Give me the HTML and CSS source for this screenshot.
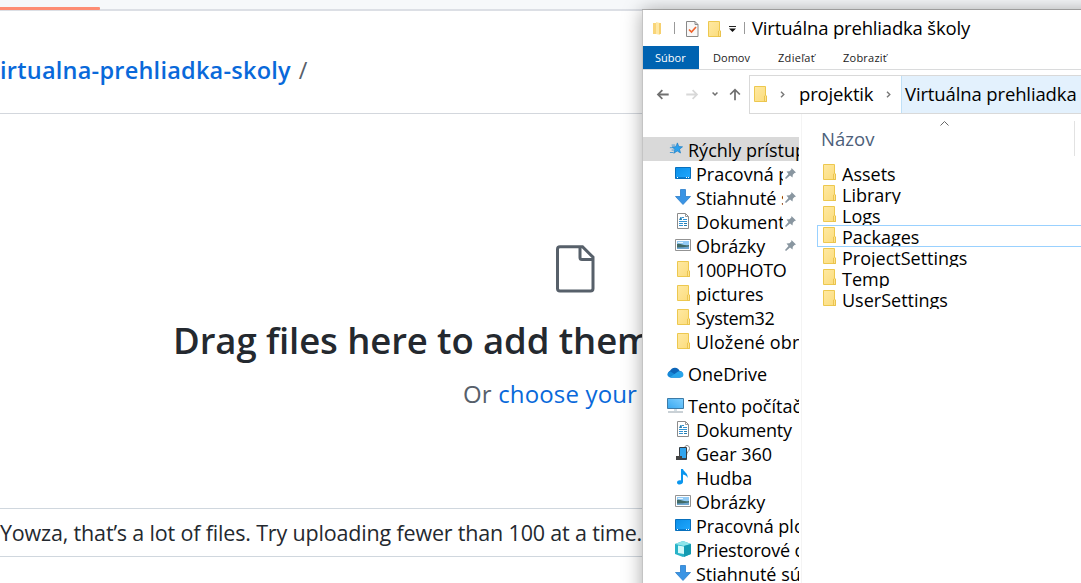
FILE: index.html
```html
<!DOCTYPE html>
<html lang="sk">
<head>
<meta charset="utf-8">
<title>Upload files</title>
<link rel="stylesheet" href="styles.css">
</head>
<body>
<svg class="defs" width="0" height="0">
  <defs>
    <linearGradient id="gold" x1="0" y1="0" x2="1" y2="1"><stop offset="0" stop-color="#ffe9a2"/><stop offset="1" stop-color="#fbdc7c"/></linearGradient>
    <linearGradient id="screen" x1="0" y1="0" x2="1" y2="1"><stop offset="0" stop-color="#0b8fe8"/><stop offset="1" stop-color="#20a8ff"/></linearGradient>
    <linearGradient id="monitor" x1="0" y1="1" x2="1" y2="0"><stop offset="0" stop-color="#38a8f0"/><stop offset="1" stop-color="#7fcfff"/></linearGradient>
  </defs>
  <symbol id="folder" viewBox="0 0 14 17"><path d="M.5.5h11v9.5h1v5.5H.5z" fill="url(#gold)" stroke="#edc84f"/><path d="M10.5 15.5V10l1-.8 1 .8v5.5z" fill="#ffe48c" stroke="#e6bd45" stroke-width=".8"/></symbol>
  <symbol id="star" viewBox="0 0 16 16"><path d="M9.600 1l1.600 4.200 4.300.3-3.500 2.700 1.200 4.400-3.800-2.300-3.900 2.600 1.200-4.600L3.400 5.600l4.500-.3z" fill="#2da1ed" stroke="#1276c0" stroke-width=".7"/><path d="M3 3.500h4M1 6.500h4M3 9.200h3M1 12h4" stroke="#3c94d2"/></symbol>
  <symbol id="desktop" viewBox="0 0 16 12"><path d="M.5.5h15v11H.5z" fill="url(#screen)" stroke="#0870bd"/><path d="M1 10.500h14" stroke="#087bce"/><path d="M2 10.500h1M11 10.500h1M13 10.500h1" stroke="#fff"/></symbol>
  <symbol id="down" viewBox="0 0 16 16"><path d="M5.500.5h5v7h5L8 15.500.5 7.500h5z" fill="#3a94e4" stroke="#2a7dcc" stroke-width=".8"/></symbol>
  <symbol id="doc" viewBox="0 0 12 16"><path d="M.5.500h8l3 3v12H.5z" fill="#fff" stroke="#8b8b8b"/><path d="M8.500.5v3h3" fill="none" stroke="#999"/><path d="M5 4.500h2M6 6.500h4M2 8.500h8M2 10.500h4M2 12.500h4" stroke="#3292d2"/><path d="M2 7l1.500-3h1L5 7zM7 10h3v1H7zM7 12h3v1H7z" fill="#257eb1"/></symbol>
  <symbol id="image" viewBox="0 0 16 12"><path d="M.5.500h15v11H.5z" fill="#fff" stroke="#939393"/><path d="M2 2h12v8H2z" fill="#92cbf5"/><path d="M2 5c4-1 6 2 12 1v4H2z" fill="#416b68"/><path d="M2 8.500c4 0 8-.5 12-1V10H2z" fill="#6ea6d0"/><path d="M3 3.500h5" stroke="#e9f6ff"/></symbol>
  <symbol id="cloud" viewBox="0 0 17 11"><path d="M4 10.500A3.700 3.700 0 0 1 3.200 3.600 5.200 5.200 0 0 1 12.700 4 3.300 3.300 0 0 1 13.200 10.500z" fill="#0d65b8"/><path d="M4 10.500C-.7 10.500-.6 4.800 3.300 4.500l10 6z" fill="#1689d8"/><path d="M3 10.300L10 5.200c1-1.100 2.800-1.400 4-.6 3.500 1 3 5.900-.4 5.900H4z" fill="#28a5eb"/></symbol>
  <symbol id="computer" viewBox="0 0 17 15"><path d="M.5.500h16v10H.5z" fill="url(#monitor)" stroke="#3d7ba7"/><path d="M7 11h3v2H7z" fill="#d5dfe5"/><path d="M1 14h15" stroke="#93a2ac"/></symbol>
  <symbol id="device" viewBox="0 0 16 16"><path d="M9.500 3.500c0-4 5-4 5 0 0 3-3 3-3 7" fill="none" stroke="#888"/><path d="M4.500 2.500h7v12h-7z" fill="#31a5ef" stroke="#343c43"/><path d="M1 11h3v-2h1v2h2v4H1z" fill="#444"/><path d="M5 13h6v2H5z" fill="#38434d"/></symbol>
  <symbol id="note" viewBox="0 0 12 16"><path d="M4 0h2c.5 3 5.500 4 4.500 9-.5-2-2-3-4.500-3.500V13C6 16 0 16.500 0 13.500 0 11.500 2.500 11 4 11.500z" fill="#0b96ee"/></symbol>
  <symbol id="cube" viewBox="0 0 16 16"><path d="M0 3l8-3 8 3v10l-8 3-8-3z" fill="#28b3c8"/><path d="M0 3l8-3 8 3-7 2z" fill="#8ee5ea"/><path d="M3 4.500l6 1V13l-6-1z" fill="#d3fafa"/><path d="M9 5l7-2v10l-7 3z" fill="#139bb2"/></symbol>
  <symbol id="pin" viewBox="0 0 11 11"><path d="M6.500 0L11 4.500 9.500 5 7.800 6.800 7.500 9.500 5 7.500 1 11 0 10 3.500 6 1.500 3.500 4.500 3.200 6.300 1.500z" fill="#8996a0"/></symbol>
</svg>

<div class="screen">
  <main class="page">
    <div class="topbar"><div class="active-tab"></div></div>
    <div class="crumb"><a class="repo">irtualna-prehliadka-skoly</a><span class="slash">/</span></div>
    <section class="drop">
      <svg class="file-icon" viewBox="0 0 40 48" fill="none" stroke="#57606a" stroke-width="3"><path d="M5 1.700h22.500L38 12.200V43.500a2.500 2.500 0 0 1-2.500 2.500H5a2.500 2.500 0 0 1-2.500-2.500V4.200A2.500 2.500 0 0 1 5 1.700z"/><path d="M25 2v10.500a2 2 0 0 0 2 2h11"/></svg>
      <h1>Drag files here to add them</h1>
      <p class="choose">Or <a>choose your</a></p>
    </section>
    <div class="warning">Yowza, that’s a lot of files. Try uploading fewer than 100 at a time.</div>
  </main>

  <section class="window">
    <header class="titlebar">
      <svg class="app-folder" viewBox="0 0 10 13"><path d="M0 1h7v11H0z" fill="#f9d579"/><path d="M3 0l4 1v12l-4-1z" fill="#ffe8a5"/><path d="M6 1h2v11H6z" fill="#f6d06f"/></svg>
      <i class="rule r1"></i>
      <svg class="check" viewBox="0 0 13 16"><path d="M.5.500h8.500l3 3v12H.5z" fill="#f8f8f8" stroke="#888"/><path d="M9 .5v3h3" fill="none" stroke="#888"/><path d="M3 8.500l2.500 2.500 4.500-5" fill="none" stroke="#f0642d" stroke-width="1.700"/></svg>
      <svg class="folder"><use href="#folder"/></svg>
      <svg class="menu" viewBox="0 0 7 6"><path d="M0 .5h7" stroke="#222"/><path d="M0 2.500h7L3.500 6z" fill="#111"/></svg>
      <i class="rule r2"></i>
      <span class="title">Virtuálna prehliadka školy</span>
    </header>
    <nav class="tabs"><span class="tab file">Súbor</span><span class="tab home">Domov</span><span class="tab share">Zdieľať</span><span class="tab view">Zobraziť</span></nav>
    <div class="address">
      <svg class="nav-icons" viewBox="0 0 106 40" fill="none" stroke="#707070" stroke-width="1.800"><path d="M25 20H14M18.500 15.500L14 20l4.500 4.500"/><path d="M43 20h11M49.500 15.500L54 20l-4.500 4.500" stroke="#d8d8d8"/><path d="M70 18l2.500 2.500L75 18" stroke-width="1.600"/><path d="M93 26V15M88 20l5-5 5 5"/></svg>
      <div class="path">
        <svg class="folder"><use href="#folder"/></svg>
        <svg class="chev c1" viewBox="0 0 5 7"><path d="M1 .7l2.800 2.800L1 6.300"/></svg>
        <span class="parent">projektik</span>
        <svg class="chev c2" viewBox="0 0 5 7"><path d="M1 .7l2.800 2.800L1 6.300"/></svg>
        <span class="current">Virtuálna prehliadka</span>
      </div>
    </div>
    <div class="body">
      <aside class="tree">
        <div class="row root selected"><svg class="ico star"><use href="#star"/></svg><span>Rýchly prístup</span></div>
        <div class="row pinned"><svg class="ico wide"><use href="#desktop"/></svg><span>Pracovná plocha</span><svg class="pin"><use href="#pin"/></svg></div>
        <div class="row pinned"><svg class="ico"><use href="#down"/></svg><span>Stiahnuté súbory</span><svg class="pin"><use href="#pin"/></svg></div>
        <div class="row pinned"><svg class="ico"><use href="#doc"/></svg><span>Dokumenty</span><svg class="pin"><use href="#pin"/></svg></div>
        <div class="row pinned"><svg class="ico wide"><use href="#image"/></svg><span>Obrázky</span><svg class="pin"><use href="#pin"/></svg></div>
        <div class="row"><svg class="ico fold"><use href="#folder"/></svg><span class="photo">100PHOTO</span></div>
        <div class="row"><svg class="ico fold"><use href="#folder"/></svg><span>pictures</span></div>
        <div class="row"><svg class="ico fold"><use href="#folder"/></svg><span class="system">System32</span></div>
        <div class="row"><svg class="ico fold"><use href="#folder"/></svg><span class="saved">Uložené obrázky</span></div>
        <div class="row root gap"><svg class="ico cloud"><use href="#cloud"/></svg><span>OneDrive</span></div>
        <div class="row root gap"><svg class="ico pc"><use href="#computer"/></svg><span>Tento počítač</span></div>
        <div class="row"><svg class="ico"><use href="#doc"/></svg><span class="docs">Dokumenty</span></div>
        <div class="row"><svg class="ico"><use href="#device"/></svg><span>Gear 360</span></div>
        <div class="row"><svg class="ico"><use href="#note"/></svg><span>Hudba</span></div>
        <div class="row"><svg class="ico wide"><use href="#image"/></svg><span>Obrázky</span></div>
        <div class="row"><svg class="ico wide"><use href="#desktop"/></svg><span>Pracovná plocha</span></div>
        <div class="row"><svg class="ico"><use href="#cube"/></svg><span class="spatial">Priestorové objekty</span></div>
        <div class="row"><svg class="ico"><use href="#down"/></svg><span>Stiahnuté súbory</span></div>
      </aside>
      <section class="files">
        <div class="columns"><span>Názov</span><svg class="sort" viewBox="0 0 9 5"><path d="M.5 4.500l4-4 4 4" fill="none" stroke="#666"/></svg></div>
        <div class="list">
          <div class="item"><svg class="folder"><use href="#folder"/></svg><span>Assets</span></div>
          <div class="item"><svg class="folder"><use href="#folder"/></svg><span>Library</span></div>
          <div class="item"><svg class="folder"><use href="#folder"/></svg><span>Logs</span></div>
          <div class="item focused"><svg class="folder"><use href="#folder"/></svg><span>Packages</span></div>
          <div class="item"><svg class="folder"><use href="#folder"/></svg><span>ProjectSettings</span></div>
          <div class="item"><svg class="folder"><use href="#folder"/></svg><span>Temp</span></div>
          <div class="item"><svg class="folder"><use href="#folder"/></svg><span>UserSettings</span></div>
        </div>
      </section>
    </div>
  </section>
</div>
</body>
</html>
```

FILE: styles.css
```css
* { box-sizing: border-box; }
body { margin: 0; font-family: "Open Sans", "Noto Sans", sans-serif; color: #000; }
svg { display: block; flex: none; }
.defs { position: absolute; }
.screen { position: relative; width: 1081px; height: 583px; overflow: hidden; background: #fff; white-space: nowrap; }

/* upload page */
.topbar { height: 11px; padding-top: 7px; background: #f6f8fa; border-bottom: 2px solid #dcdfe5; }
.active-tab { width: 100px; height: 3px; background: #fd8c73; border-radius: 0 1px 1px 0; }
.crumb { display: flex; height: 103px; line-height: 32px; padding-top: 43px; border-bottom: 1px solid #d3d7dd; font-size: 23.5px; }
.repo { font-weight: 600; color: #0969da; letter-spacing: .24px; }
.slash { margin-left: 8px; color: #57606a; }
.drop { display: flex; flex-direction: column; height: 394px; padding-top: 131px; }
.file-icon { width: 40px; height: 48px; margin-left: 555px; }
h1 { margin: 22px 0 0 173px; font-size: 36.5px; line-height: 50px; font-weight: 600; letter-spacing: -.1px; color: #24292f; }
.choose { margin: 13px 0 0 463px; font-size: 24px; line-height: 32px; letter-spacing: .15px; color: #57606a; }
.choose a { color: #0969da; }
.warning { height: 49px; border: solid #d0d7de; border-width: 1px 0; line-height: 48px; font-size: 21.5px; letter-spacing: -.17px; color: #24292f; }

/* file manager window */
.window { position: absolute; left: 642px; top: 10px; width: 460px; height: 600px; background: #fff; border-left: 1px solid #c4c4c4; box-shadow: 0 0 18px rgba(0,0,0,.34), 0 -1px 0 #bbb; }
.folder { width: 14px; height: 17px; }
.titlebar { display: flex; align-items: center; height: 36px; padding-left: 10px; }
.app-folder { width: 10px; height: 13px; }
.rule { width: 1px; height: 12px; background: #999; }
.r1 { margin: 0 11px; }
.check { width: 13px; height: 16px; margin-right: 9px; margin-top: 1px; }
.titlebar .folder { margin-top: 2px; }
.menu { width: 7px; height: 6px; margin: 2px 8px 0 7px; }
.title { margin: -2px 0 0 7px; font-size: 18.5px; letter-spacing: -.17px; }
.tabs { display: flex; height: 24px; border-bottom: 1px solid #dadbdc; font-size: 11px; line-height: 23px; color: #222; }
.tab { letter-spacing: .03px; }
.file { width: 56px; padding-left: 12px; background: #0063b1; color: #fff; }
.home { width: 65px; padding-left: 14px; }
.share { width: 65px; padding-left: 14px; letter-spacing: .32px; }
.view { padding-left: 14px; letter-spacing: .24px; }
.address { display: flex; height: 44px; padding-top: 5px; font-size: 18.5px; }
.nav-icons { width: 106px; height: 39px; }
.path { display: flex; align-items: center; flex: 1; height: 39px; border: 1px solid #d9d9d9; border-right: 0; padding-left: 4px; }
.chev { width: 5px; height: 7px; fill: none; stroke: #777; stroke-width: 1.4; }
.c1 { margin: 0 14px 0 12px; }
.c2 { margin: 0 10px 0 14px; }
.parent { width: 73px; margin-top: -2px; letter-spacing: -.15px; }
.current { align-self: stretch; flex: 1; padding-left: 3px; line-height: 36px; border-left: 1px solid #bfe0f7; background: #e3f1fd; letter-spacing: -.13px; }
.body { display: flex; }
.tree { width: 159px; padding-top: 23px; height: 470px; border-right: 1px solid #f4f4f4; font-size: 18px; line-height: 24px; }
.row { display: flex; align-items: center; width: 156px; height: 24px; padding-left: 32px; overflow: hidden; }
.row span { flex: 1; min-width: 0; overflow: hidden; padding-top: 2px; }
.root { padding-left: 24px; }
.gap { margin-top: 8px; }
.selected { background: #d9d9d9; }
.ico { width: 16px; height: 16px; margin-right: 5px; }
.star { width: 14px; height: 14px; margin: 0 5px 0 2px; }
.wide { height: 12px; }
.fold { width: 14px; height: 17px; margin: 0 5px 0 2px; }
.cloud { width: 17px; height: 11px; margin: -2px 4px 0 0; }
.pc { width: 17px; height: 15px; margin-right: 4px; }
.pin { width: 11px; height: 11px; margin: 0 3px 0 2px; }
.photo { letter-spacing: -.3px; }
.system { letter-spacing: -.36px; }
.docs { letter-spacing: -.2px; }
.saved { letter-spacing: .12px; }
.spatial { letter-spacing: -.18px; }
.files { flex: 1; padding-left: 15px; }
.columns { display: flex; width: 258px; height: 35px; margin-top: 7px; border-right: 1px solid #e2e2e2; padding-left: 4px; color: #4c607a; font-size: 18.5px; line-height: 35px; }
.columns span { width: 119px; letter-spacing: .05px; }
.sort { width: 9px; height: 5px; }
.list { padding-top: 6px; font-size: 18px; }
.item { display: flex; height: 21px; padding-left: 6px; overflow: hidden; line-height: 24px; letter-spacing: 0; }
.item .folder { margin: 2px 5px 0 0; }
.focused { height: 22px; margin: 0 0 -1px; padding-left: 5px; border: 1px solid #99d1ff; line-height: 22px; }
.focused .folder { margin-top: 1px; }
```
